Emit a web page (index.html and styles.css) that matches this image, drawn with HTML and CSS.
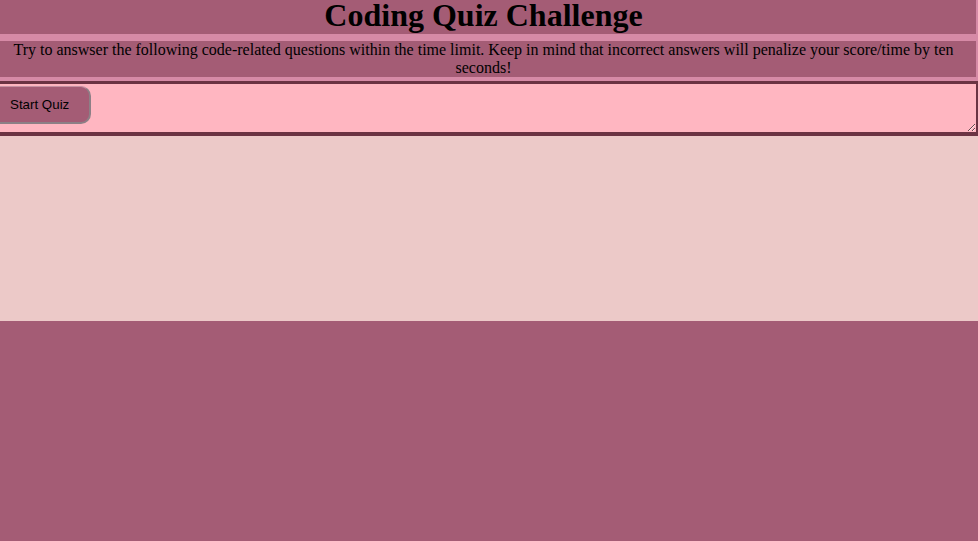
FILE: index.html
```html
<!DOCTYPE html>
<html lang="en">
<head>
<meta charset="utf-8">
<title>Coding Quiz Challenge</title>
<link rel="stylesheet" href="styles.css">
</head>
<body>
<header class="header">
  <h1 class="title">Coding Quiz Challenge</h1>
  <p class="intro">Try to answser the following code-related questions within the time limit. Keep in mind that incorrect answers will penalize your score/time by ten seconds!</p>
</header>
<section class="quiz">
  <button class="start-btn" type="button">Start Quiz</button>
</section>
<div class="results"></div>
</body>
</html>
```
FILE: styles.css
```css
html, body {
  margin: 0;
  padding: 0;
}
body {
  background: #a45c75;
  font-family: "Liberation Serif", "Times New Roman", serif;
  color: #000;
}
.header {
  background: #d68aa6;
  padding-right: 2px;
  padding-bottom: 1px;
}
.title {
  margin: 0 0 7px;
  padding-right: 9px;
  height: 34px;
  line-height: 31px;
  font-size: 32px;
  font-weight: bold;
  text-align: center;
  background: #a45c75;
}
.intro {
  margin: 0 0 3px;
  padding-right: 9px;
  font-size: 16px;
  text-align: center;
  background: #a45c75;
}
.quiz {
  background: #ffb6c1;
  border-top: 3px solid #6b3343;
  border-bottom: 4px solid #6b3343;
  border-right: 2px solid #6b3343;
  border-left: 0;
  height: 48px;
  overflow: hidden;
  resize: both;
}
.start-btn {
  display: block;
  margin: 2px 0 0 -12px;
  height: 38px;
  padding: 0 20px 0 21px;
  font-family: "Liberation Sans", Arial, sans-serif;
  font-size: 13.33px;
  color: #000;
  background: #a45c75;
  border-style: solid;
  border-width: 1px 2px 2px 1px;
  border-color: #c590a2 #8d7f86 #8d7f86 #c590a2;
  border-radius: 10px;
}
.results {
  background: #ecc9c8;
  height: 185px;
}
```
